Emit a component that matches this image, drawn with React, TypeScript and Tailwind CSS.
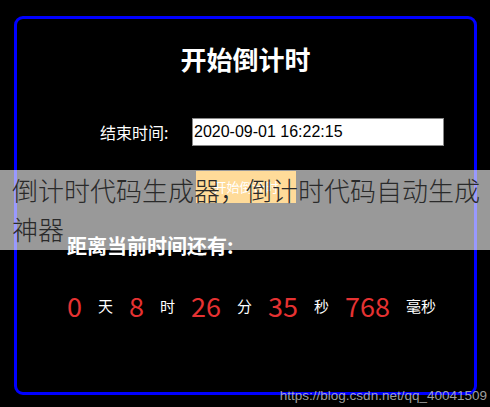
import { useState } from "react";

const cjk = "font-['Noto_Sans_CJK_SC',sans-serif]";

export default function App() {
  const [endTime, setEndTime] = useState("2020-09-01 16:22:15");

  const parts = [
    { value: "0", unit: "天" },
    { value: "8", unit: "时" },
    { value: "26", unit: "分" },
    { value: "35", unit: "秒" },
    { value: "768", unit: "毫秒" },
  ];

  return (
    <div className={`relative w-[490px] h-[407px] bg-black overflow-hidden ${cjk}`}>
      {/* COUNTDOWN BOX */}
      <div className="ml-[14px] mt-[16px] w-[463px] h-[379px] border-[3px] border-[#0000ff] rounded-[9px] flex flex-col">
        <h1 className="mt-[22px] text-center text-[26px] leading-[36px] font-bold text-white">
          开始倒计时
        </h1>

        <div className="mt-[41px] flex items-center pl-[83px]">
          <span className="w-[92px] text-[16px] text-white leading-[20px]">结束时间:</span>
          <input
            value={endTime}
            onChange={(e) => setEndTime(e.target.value)}
            className="w-[252px] h-[28px] bg-white border border-[#888] px-[1px] text-[16px] text-black font-['Liberation_Sans',sans-serif] outline-none"
          />
        </div>

        <div className="mt-[25px] pl-[179px]">
          <button className="block w-[100px] h-[32px] bg-[#ffa500] text-white text-[13px]">
            开始倒计时
          </button>
        </div>

        <p className="mt-[30px] pl-[50px] text-[20px] leading-[26px] font-bold text-white">
          距离当前时间还有:
        </p>

        <div className="mt-[29px] pl-[50px] flex items-center">
          {parts.map((p) => (
            <div key={p.unit} className="flex items-center mr-[16px]">
              <span className="text-[27px] leading-[36px] text-[#e63232]">{p.value}</span>
              <span className="ml-[16px] text-[15px] text-white">{p.unit}</span>
            </div>
          ))}
        </div>
      </div>

      {/* GRAY BANNER OVERLAY */}
      <div className="absolute left-0 right-0 top-[170px] h-[80px] bg-white/60 pl-[12px] text-[26px] leading-[39px] font-light text-[#2a2a2a]">
        倒计时代码生成器，倒计时代码自动生成神器
      </div>

      {/* WATERMARK */}
      <div className="absolute right-[3px] bottom-[1px] text-[13.5px] text-[#c8c8c8]/80 font-['Liberation_Sans',sans-serif]">
        https://blog.csdn.net/qq_40041509
      </div>
    </div>
  );
}
